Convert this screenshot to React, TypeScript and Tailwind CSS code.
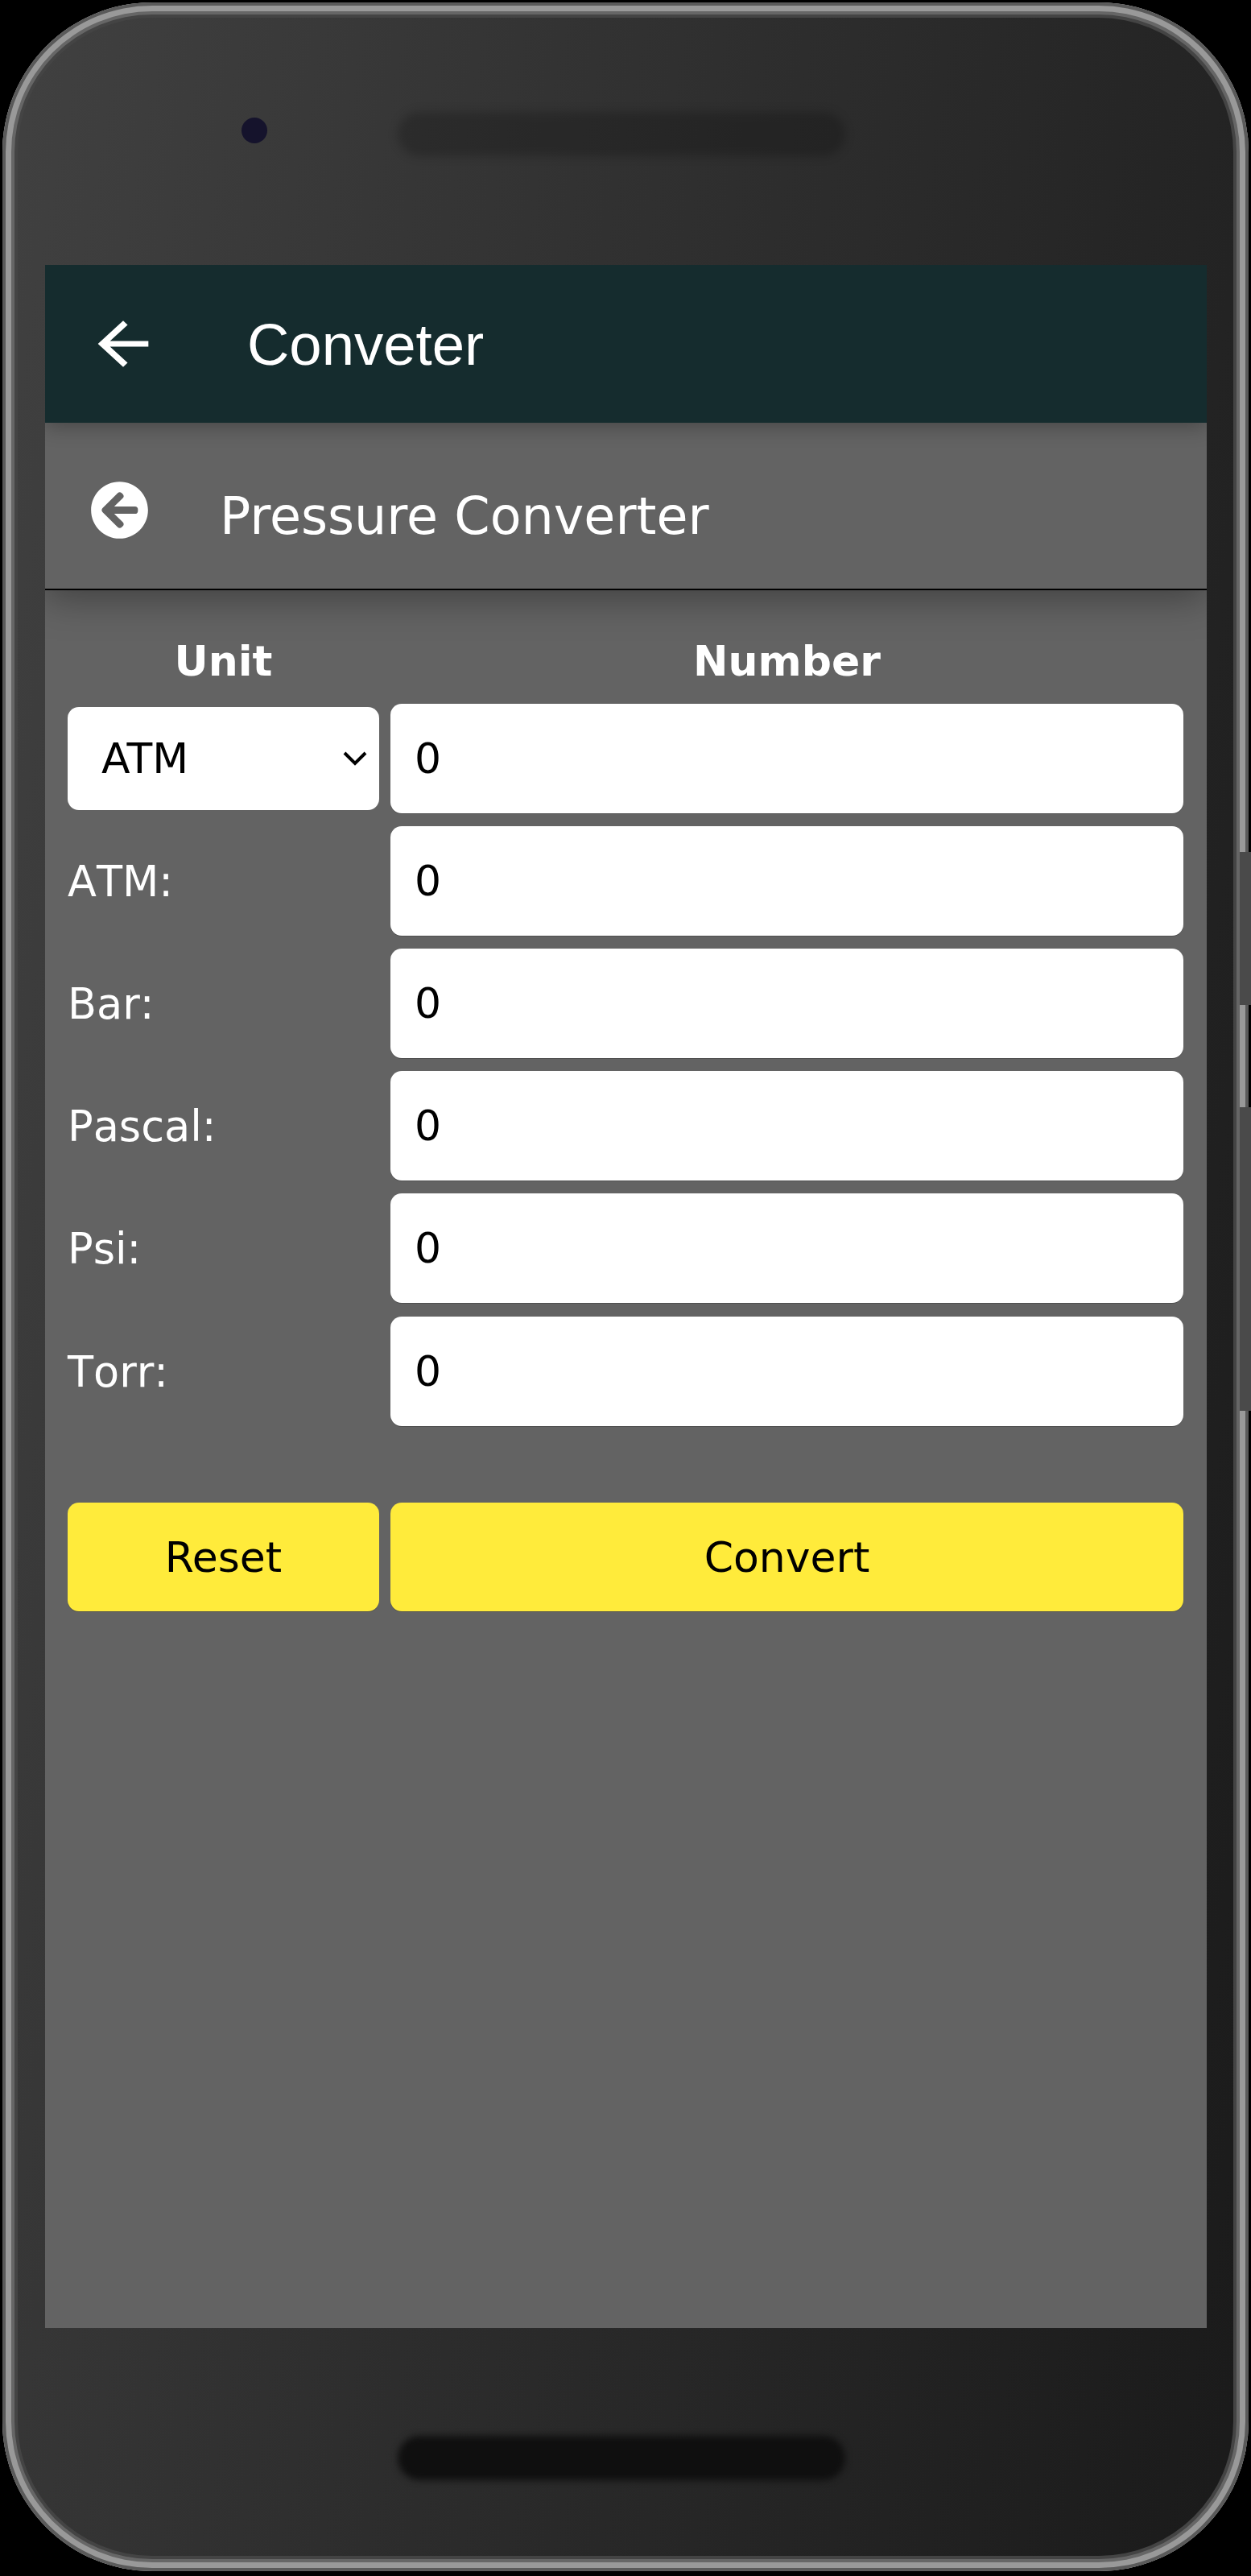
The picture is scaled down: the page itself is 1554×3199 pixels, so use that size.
import React from "react";
import { FaArrowCircleLeft } from "react-icons/fa";

const input =
  "w-full h-[136px] rounded-[14px] bg-white pl-[30px] text-[52px] text-black font-['DejaVu_Sans',sans-serif] outline-none border-0 shadow-[0_1px_0_rgba(0,0,0,0.2)]";
const rowGrid = "grid grid-cols-[387px_985px] gap-x-[14px] items-center";

function Row({ label, extra = "" }: { label: string; extra?: string }) {
  return (
    <div className={`${rowGrid} ${extra}`}>
      <span className="pt-[2px] text-[52.5px] text-white [font-kerning:none]">{label}</span>
      <input className={input} value="0" readOnly />
    </div>
  );
}

export default function App() {
  return (
    <div className="relative w-[1554px] h-[3199px] bg-black overflow-hidden pl-[3px] pt-[3px] font-['DejaVu_Sans',sans-serif]">
      <div className="w-[1548px] h-[3190px] rounded-[186px] bg-[linear-gradient(100deg,#414141_0%,#2e2e2e_45%,#1a1a1a_100%)] shadow-[inset_0_0_0_4px_#5a5a5a,inset_0_0_0_11px_#999999,inset_0_0_0_15px_#666666,inset_0_0_0_19px_#444444] flex flex-col">
        {/* top bezel */}
        <div className="h-[326px] flex items-start pl-[297px]">
          <div className="mt-[143px] w-[32px] h-[32px] rounded-full bg-[#15132c]" />
          <div className="mt-[136px] ml-[162px] w-[556px] h-[55px] rounded-[28px] bg-black/20 blur-[6px]" />
        </div>

        {/* screen */}
        <div className="ml-[53px] w-[1443px] h-[2562px] bg-[#636363] overflow-hidden flex flex-col">
          <div className="relative z-20 h-[196px] shrink-0 bg-[#152c2e] flex items-center shadow-[0_4px_24px_rgba(0,0,0,0.3)]">
            <svg
              className="ml-[50px] w-[94px] h-[86px] text-white"
              viewBox="0 0 24 24"
              preserveAspectRatio="none"
              fill="currentColor"
            >
              <path d="M20 11H7.83l5.59-5.59L12 4l-8 8 8 8 1.41-1.41L7.83 13H20v-2z" />
            </svg>
            <span className="ml-[107px] mt-[3px] text-[72.5px] text-white font-['Liberation_Sans',sans-serif]">Conveter</span>
          </div>

          <div className="relative z-10 h-[208px] shrink-0 bg-[#636363] border-b-[2px] border-black flex items-center shadow-[0_10px_44px_rgba(0,0,0,0.35)]">
            <FaArrowCircleLeft className="ml-[56px] w-[73px] h-[73px] text-white mt-[10px]" />
            <span className="ml-[88px] mt-[28px] text-[63.5px] text-white">Pressure Converter</span>
          </div>

          <div className="px-[28px] flex flex-col">
            <div className={`${rowGrid} h-[64px] mt-[49px] mb-[28px]`}>
              <span className="text-center text-[52px] font-bold text-white">Unit</span>
              <span className="text-center text-[52px] font-bold text-white">Number</span>
            </div>

            <div className="flex flex-col gap-y-[16px]">
              <div className={rowGrid}>
                <div className="relative h-[128px]">
                  <select className="w-full h-full appearance-none rounded-[14px] bg-white pl-[42px] text-[52px] text-black outline-none border-0">
                    <option>ATM</option>
                  </select>
                  <svg
                    className="absolute right-[15px] top-[53px] w-[30px] h-[20px] text-black pointer-events-none"
                    viewBox="0 0 30 20"
                    fill="none"
                    stroke="currentColor"
                    strokeWidth="4"
                  >
                    <path d="M2 4l13 13L28 4" />
                  </svg>
                </div>
                <input className={input} value="0" readOnly />
              </div>
              <Row label="ATM:" />
              <Row label="Bar:" />
              <Row label="Pascal:" />
              <Row label="Psi:" />
              <Row label="Torr:" extra="mt-[1px]" />
            </div>

            <div className="grid grid-cols-[387px_985px] gap-x-[14px] mt-[95px]">
              <button className="h-[135px] rounded-[14px] bg-[#ffeb3b] text-[52px] text-black shadow-[0_1px_0_rgba(0,0,0,0.2)]">Reset</button>
              <button className="h-[135px] rounded-[14px] bg-[#ffeb3b] text-[52px] text-black shadow-[0_1px_0_rgba(0,0,0,0.2)]">Convert</button>
            </div>
          </div>
        </div>

        {/* bottom bezel */}
        <div className="flex justify-center pt-[134px] pr-[10px]">
          <div className="w-[556px] h-[55px] rounded-[28px] bg-[#0f0f0f] blur-[4px]" />
        </div>
      </div>

      {/* side buttons */}
      <div className="absolute right-0 top-[1058px] w-[14px] h-[190px] bg-[#4a4a4a]" />
      <div className="absolute right-0 top-[1375px] w-[14px] h-[377px] bg-[#4a4a4a]" />
    </div>
  );
}
